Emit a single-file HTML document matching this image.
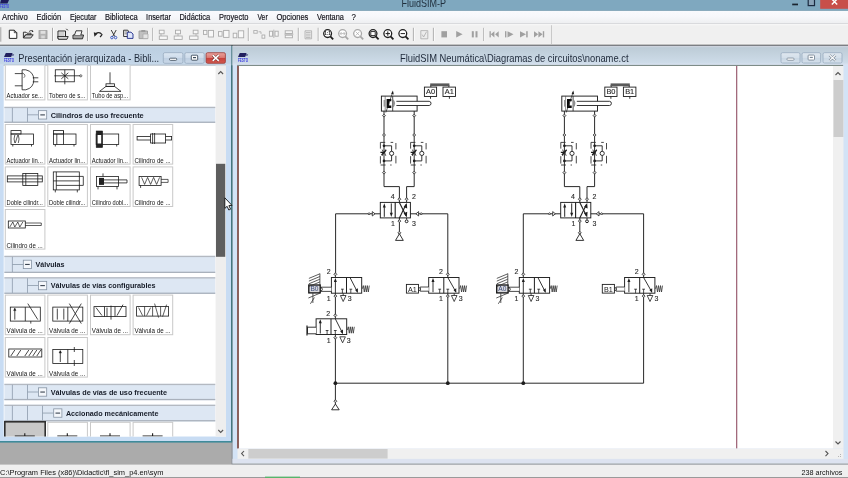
<!DOCTYPE html><html><head><meta charset="utf-8"><style>*{margin:0;padding:0}html,body{width:848px;height:478px;overflow:hidden;background:#ababab}svg{display:block}</style></head><body>
<svg width="848" height="478" viewBox="0 0 848 478" style="will-change:transform" font-family='"Liberation Sans", sans-serif'>
<defs>
<linearGradient id="gtitle" x1="0" y1="0" x2="0" y2="1"><stop offset="0" stop-color="#d3dee9"/><stop offset="0.1" stop-color="#bccfe1"/><stop offset="0.9" stop-color="#c4d6e8"/><stop offset="1" stop-color="#d4e2ef"/></linearGradient>
<linearGradient id="gtitle2" x1="0" y1="0" x2="0" y2="1"><stop offset="0" stop-color="#d6d8e2"/><stop offset="0.1" stop-color="#bdccd7"/><stop offset="0.85" stop-color="#cddbe8"/><stop offset="1" stop-color="#dbe4f3"/></linearGradient>
<linearGradient id="gbtn" x1="0" y1="0" x2="0" y2="1"><stop offset="0" stop-color="#dce7f2"/><stop offset="0.5" stop-color="#cddbea"/><stop offset="0.5" stop-color="#bfd0e2"/><stop offset="1" stop-color="#c9d8e8"/></linearGradient>
<linearGradient id="gbtn2" x1="0" y1="0" x2="0" y2="1"><stop offset="0" stop-color="#dfe7ef"/><stop offset="0.5" stop-color="#d4dfea"/><stop offset="0.5" stop-color="#c9d7e4"/><stop offset="1" stop-color="#d5e0eb"/></linearGradient>
<linearGradient id="gmenu" x1="0" y1="0" x2="0" y2="1"><stop offset="0" stop-color="#f9fafd"/><stop offset="0.5" stop-color="#f6f7fa"/><stop offset="1" stop-color="#eeeff1"/></linearGradient>
<linearGradient id="gclose" x1="0" y1="0" x2="0" y2="1"><stop offset="0" stop-color="#e9a09a"/><stop offset="0.45" stop-color="#dc7c76"/><stop offset="0.5" stop-color="#c8403b"/><stop offset="1" stop-color="#d25a50"/></linearGradient>
</defs>
<rect x="0" y="0" width="848" height="478" fill="#ababab" stroke="none" stroke-width="1" />
<rect x="0" y="0" width="848" height="10.5" fill="#7fa8bf" stroke="none" stroke-width="1" />
<rect x="0" y="10" width="848" height="1" fill="#6e97ad" stroke="none" stroke-width="1" />
<path d="M1 0 L9 0 L7.5 3.5 L0 3.5 Z" stroke="none" stroke-width="1" fill="#1d1a5a" />
<text x="4.5" y="8.2" font-size="4.6" fill="#3a3ae0" font-weight="bold" text-anchor="middle"  textLength="9" lengthAdjust="spacingAndGlyphs">FESTO</text>
<text x="401.5" y="7.4" font-size="11" fill="#1f2e3c" font-weight="normal" text-anchor="start"  textLength="44.5" lengthAdjust="spacingAndGlyphs">FluidSIM-P</text>
<rect x="792.2" y="3.6" width="5.8" height="1.7" fill="#1b2530" stroke="none" stroke-width="1" />
<rect x="808.2" y="-1" width="6.3" height="6.6" fill="#8aa3b8" stroke="#1b2a40" stroke-width="1.2" />
<rect x="820.2" y="0" width="28" height="8.8" fill="#c84f4a" stroke="none" stroke-width="1" />
<path d="M831.8 -1 L837.2 4.6 M837.2 -1 L831.8 4.6" stroke="#fff" stroke-width="1.4" fill="none" />
<rect x="0" y="10.8" width="848" height="12.4" fill="url(#gmenu)"/>
<rect x="0" y="23" width="848" height="1" fill="#d9dadd" stroke="none" stroke-width="1" />
<text x="2.0" y="20" font-size="8.4" fill="#101018" font-weight="normal" text-anchor="start" stroke="#101018" stroke-width="0.15" textLength="25.8" lengthAdjust="spacingAndGlyphs">Archivo</text>
<text x="36.6" y="20" font-size="8.4" fill="#101018" font-weight="normal" text-anchor="start" stroke="#101018" stroke-width="0.15" textLength="24.6" lengthAdjust="spacingAndGlyphs">Edición</text>
<text x="69.9" y="20" font-size="8.4" fill="#101018" font-weight="normal" text-anchor="start" stroke="#101018" stroke-width="0.15" textLength="26.5" lengthAdjust="spacingAndGlyphs">Ejecutar</text>
<text x="104.9" y="20" font-size="8.4" fill="#101018" font-weight="normal" text-anchor="start" stroke="#101018" stroke-width="0.15" textLength="32.8" lengthAdjust="spacingAndGlyphs">Biblioteca</text>
<text x="146.1" y="20" font-size="8.4" fill="#101018" font-weight="normal" text-anchor="start" stroke="#101018" stroke-width="0.15" textLength="24.8" lengthAdjust="spacingAndGlyphs">Insertar</text>
<text x="179.4" y="20" font-size="8.4" fill="#101018" font-weight="normal" text-anchor="start" stroke="#101018" stroke-width="0.15" textLength="30.8" lengthAdjust="spacingAndGlyphs">Didáctica</text>
<text x="218.9" y="20" font-size="8.4" fill="#101018" font-weight="normal" text-anchor="start" stroke="#101018" stroke-width="0.15" textLength="29.5" lengthAdjust="spacingAndGlyphs">Proyecto</text>
<text x="257.4" y="20" font-size="8.4" fill="#101018" font-weight="normal" text-anchor="start" stroke="#101018" stroke-width="0.15" textLength="10.3" lengthAdjust="spacingAndGlyphs">Ver</text>
<text x="276.4" y="20" font-size="8.4" fill="#101018" font-weight="normal" text-anchor="start" stroke="#101018" stroke-width="0.15" textLength="32" lengthAdjust="spacingAndGlyphs">Opciones</text>
<text x="316.9" y="20" font-size="8.4" fill="#101018" font-weight="normal" text-anchor="start" stroke="#101018" stroke-width="0.15" textLength="27" lengthAdjust="spacingAndGlyphs">Ventana</text>
<text x="351.6" y="20" font-size="8.4" fill="#101018" font-weight="normal" text-anchor="start" stroke="#101018" stroke-width="0.15" textLength="4.4" lengthAdjust="spacingAndGlyphs">?</text>
<rect x="0" y="24" width="848" height="21" fill="#f0f0f0" stroke="none" stroke-width="1" />
<rect x="0" y="43.8" width="848" height="0.7" fill="#fbfbfb" stroke="none" stroke-width="1" />
<rect x="0" y="44.7" width="848" height="1.3" fill="#4a4a4a" stroke="none" stroke-width="1" />
<rect x="0" y="27.2" width="1.4" height="14.5" fill="#b9b9b9" stroke="none" stroke-width="1" />
<path d="M9.3 30.2 L14.3 30.2 L16.8 32.7 L16.8 38.4 L9.3 38.4 Z" stroke="#262626" stroke-width="1.0" fill="#fff" />
<path d="M14.3 30.2 L14.3 32.7 L16.8 32.7" stroke="#262626" stroke-width="0.8" fill="none" />
<path d="M23.4 32.2 L26 32.2 L27 33.2 L31 33.2 L31 34.8 L25.5 34.8 L23.4 38 Z" stroke="#262626" stroke-width="0.9" fill="#e8e8e8" />
<path d="M23.4 38 L25.8 34.8 L33.2 34.8 L30.8 38 Z" stroke="#262626" stroke-width="0.9" fill="#cfcfcf" />
<path d="M29 31.5 Q31 29.6 33 31.2" stroke="#262626" stroke-width="0.8" fill="none" />
<path d="M32.2 30.2 L33.6 31.4 L31.8 32.2 Z" stroke="none" stroke-width="1" fill="#262626" />
<rect x="39.0" y="30.6" width="8" height="8" fill="#b4b4b4" stroke="#9a9a9a" stroke-width="0.8" />
<rect x="40.6" y="30.8" width="4.8" height="3" fill="#e0e0e0" stroke="none" stroke-width="1" />
<rect x="41.2" y="35.6" width="3.6" height="2.8" fill="#d8d8d8" stroke="none" stroke-width="1" />
<rect x="52.0" y="27.8" width="1" height="13.2" fill="#a9a9a9" stroke="none" stroke-width="1" />
<rect x="53.0" y="27.8" width="0.7" height="13.2" fill="#ffffff" stroke="none" stroke-width="1" />
<path d="M58 31 L65.5 31 L65.5 38.8 L58 38.8 Z" stroke="#262626" stroke-width="1.0" fill="#fff" />
<path d="M59 33 L64.5 33 M59 35 L64.5 35" stroke="#777" stroke-width="0.7" fill="none" />
<path d="M57.6 36.5 L68.2 36.5 L67 39.3 L58.5 39.3 Z" stroke="#262626" stroke-width="0.9" fill="#d5d5d5" />
<path d="M66.3 28.8 L67.8 30.3" stroke="#262626" stroke-width="1.0" fill="none" />
<path d="M73 35 L83.5 35 L82.5 38.8 L73 38.8 Z" stroke="#262626" stroke-width="1.0" fill="#cacaca" />
<path d="M74.5 35 L76 30.8 L82 30.8 L80.8 35" stroke="#262626" stroke-width="0.9" fill="#f4f4f4" />
<path d="M74 37 L82.5 37" stroke="#555" stroke-width="0.7" fill="none" />
<rect x="87.0" y="27.8" width="1" height="13.2" fill="#a9a9a9" stroke="none" stroke-width="1" />
<rect x="88.0" y="27.8" width="0.7" height="13.2" fill="#ffffff" stroke="none" stroke-width="1" />
<path d="M95.5 34 Q99 31 102 34.6 Q101 36.2 100 37" stroke="#262626" stroke-width="1.1" fill="none" />
<path d="M93.8 32.2 L97.8 33.4 L94.4 36.8 Z" stroke="none" stroke-width="1" fill="#262626" />
<path d="M111.2 30 L114.8 36.5 M116.2 30 L112.6 36.5" stroke="#262626" stroke-width="0.9" fill="none" />
<circle cx="111.9" cy="37.6" r="1.25" fill="none" stroke="#3050c0" stroke-width="0.9"/>
<circle cx="115.6" cy="37.6" r="1.25" fill="none" stroke="#3050c0" stroke-width="0.9"/>
<path d="M123.6 30.2 L127.8 30.2 L128.4 31 L128.4 36.5 L123.6 36.5 Z" stroke="#262626" stroke-width="0.9" fill="#f2f2f2" />
<path d="M127.3 32.2 L131 32.2 L133 34 L133 38.4 L127.3 38.4 Z" stroke="#1c2a8a" stroke-width="0.9" fill="#dfe6fa" />
<path d="M124.6 32 L127 32 M124.6 33.8 L127 33.8" stroke="#444" stroke-width="0.6" fill="none" />
<path d="M139 31 L147.5 31 L147.5 38.6 L139 38.6 Z" stroke="#9c9c9c" stroke-width="0.9" fill="#c0c0c0" />
<rect x="141.3" y="30" width="4" height="2" fill="#9c9c9c" stroke="none" stroke-width="1" />
<path d="M143 34 L148 34 L148 38.6 L143 38.6 Z" stroke="#a8a8a8" stroke-width="0.7" fill="#e4e4e4" />
<rect x="152.3" y="27.8" width="1" height="13.2" fill="#a9a9a9" stroke="none" stroke-width="1" />
<rect x="153.3" y="27.8" width="0.7" height="13.2" fill="#ffffff" stroke="none" stroke-width="1" />
<rect x="159.3" y="30.2" width="4.8" height="3.6" fill="#f8f8f8" stroke="#ababab" stroke-width="0.9" />
<rect x="159.3" y="36" width="8" height="3.4" fill="#f8f8f8" stroke="#ababab" stroke-width="0.9" />
<path d="M161 33.8 L161 36" stroke="#ababab" stroke-width="0.8" fill="none" />
<rect x="175.5" y="30.2" width="5" height="3.6" fill="#f8f8f8" stroke="#ababab" stroke-width="0.9" />
<rect x="174.2" y="36" width="8" height="3.4" fill="#f8f8f8" stroke="#ababab" stroke-width="0.9" />
<path d="M178 33.8 L178 36" stroke="#ababab" stroke-width="0.8" fill="none" />
<rect x="193.2" y="30.2" width="4.8" height="3.6" fill="#f8f8f8" stroke="#ababab" stroke-width="0.9" />
<rect x="189.6" y="36" width="8.4" height="3.4" fill="#f8f8f8" stroke="#ababab" stroke-width="0.9" />
<path d="M196 33.8 L196 36" stroke="#ababab" stroke-width="0.8" fill="none" />
<rect x="203.5" y="30.4" width="3.4" height="4" fill="#f8f8f8" stroke="#ababab" stroke-width="0.9" />
<rect x="208.3" y="30.4" width="5.2" height="6.6" fill="#f8f8f8" stroke="#ababab" stroke-width="0.9" />
<rect x="218.5" y="31.6" width="3.6" height="4.6" fill="#f8f8f8" stroke="#ababab" stroke-width="0.9" />
<rect x="223.6" y="30.4" width="5.4" height="7" fill="#f8f8f8" stroke="#ababab" stroke-width="0.9" />
<rect x="233.2" y="33.2" width="3.6" height="4.6" fill="#f8f8f8" stroke="#ababab" stroke-width="0.9" />
<rect x="238.3" y="30.8" width="5.4" height="7" fill="#f8f8f8" stroke="#ababab" stroke-width="0.9" />
<rect x="247.8" y="27.8" width="1" height="13.2" fill="#a9a9a9" stroke="none" stroke-width="1" />
<rect x="248.8" y="27.8" width="0.7" height="13.2" fill="#ffffff" stroke="none" stroke-width="1" />
<rect x="253.8" y="30.6" width="3.4" height="2.6" fill="#f8f8f8" stroke="#ababab" stroke-width="0.9" />
<rect x="262" y="35" width="2.8" height="3.2" fill="#f8f8f8" stroke="#ababab" stroke-width="0.9" />
<path d="M258.5 31.8 L261 31.8 L261 34" stroke="#ababab" stroke-width="0.8" fill="none" />
<rect x="269.4" y="31.2" width="3.2" height="5" fill="#f8f8f8" stroke="#ababab" stroke-width="0.9" />
<rect x="275" y="31.2" width="3.2" height="5" fill="#f8f8f8" stroke="#ababab" stroke-width="0.9" />
<path d="M273.8 29.6 L273.8 38" stroke="#ababab" stroke-width="0.8" fill="none" />
<rect x="285.2" y="30.8" width="7.2" height="2.6" fill="#f8f8f8" stroke="#ababab" stroke-width="0.9" />
<rect x="285.2" y="35.2" width="7.2" height="2.6" fill="#f8f8f8" stroke="#ababab" stroke-width="0.9" />
<path d="M284.4 34.2 L293.4 34.2" stroke="#ababab" stroke-width="0.8" fill="none" />
<rect x="297.8" y="27.8" width="1" height="13.2" fill="#a9a9a9" stroke="none" stroke-width="1" />
<rect x="298.8" y="27.8" width="0.7" height="13.2" fill="#ffffff" stroke="none" stroke-width="1" />
<path d="M305 30.8 L311.6 30.8 L311.6 38.8 L305 38.8 Z" stroke="#ababab" stroke-width="0.8" fill="#ececec" />
<path d="M306 32.5 L310.6 32.5 M306 34.2 L310.6 34.2 M306 35.9 L310.6 35.9 M306 37.5 L310.6 37.5" stroke="#ababab" stroke-width="0.7" fill="none" />
<rect x="317.7" y="27.8" width="1" height="13.2" fill="#a9a9a9" stroke="none" stroke-width="1" />
<rect x="318.7" y="27.8" width="0.7" height="13.2" fill="#ffffff" stroke="none" stroke-width="1" />
<circle cx="327.6" cy="33.6" r="3.9" fill="#fff" stroke="#1e1e1e" stroke-width="1.3"/>
<path d="M330.3 36.4 L333.20000000000005 39.4" stroke="#1e1e1e" stroke-width="1.8" fill="none" />
<text x="327.6" y="35.3" font-size="4.6" fill="#1e1e1e" font-weight="bold" text-anchor="middle" >1:1</text>
<circle cx="342.6" cy="33.6" r="3.9" fill="#fff" stroke="#a8a8a8" stroke-width="1.3"/>
<path d="M345.3 36.4 L348.20000000000005 39.4" stroke="#a8a8a8" stroke-width="1.8" fill="none" />
<path d="M340.20000000000005 33.6 L345.0 33.6 M341.6 32 L340.20000000000005 33.6 L341.6 35.2 M343.6 32 L345.0 33.6 L343.6 35.2" stroke="#a8a8a8" stroke-width="0.7" fill="none" />
<circle cx="357.6" cy="33.6" r="3.9" fill="#fff" stroke="#a8a8a8" stroke-width="1.3"/>
<path d="M360.3 36.4 L363.20000000000005 39.4" stroke="#a8a8a8" stroke-width="1.8" fill="none" />
<path d="M355.6 31.6 L359.6 35.6 M359.6 31.6 L355.6 35.6" stroke="#a8a8a8" stroke-width="0.7" fill="none" />
<circle cx="373.0" cy="33.6" r="3.9" fill="#fff" stroke="#1e1e1e" stroke-width="1.3"/>
<path d="M375.7 36.4 L378.6 39.4" stroke="#1e1e1e" stroke-width="1.8" fill="none" />
<rect x="370.8" y="31.6" width="4.4" height="4" fill="none" stroke="#1e1e1e" stroke-width="0.9" />
<circle cx="387.8" cy="33.6" r="3.9" fill="#fff" stroke="#1e1e1e" stroke-width="1.3"/>
<path d="M390.5 36.4 L393.40000000000003 39.4" stroke="#1e1e1e" stroke-width="1.8" fill="none" />
<path d="M385.6 33.6 L390.0 33.6 M387.8 31.4 L387.8 35.8" stroke="#1e1e1e" stroke-width="1.0" fill="none" />
<circle cx="402.8" cy="33.6" r="3.9" fill="#fff" stroke="#1e1e1e" stroke-width="1.3"/>
<path d="M405.5 36.4 L408.40000000000003 39.4" stroke="#1e1e1e" stroke-width="1.8" fill="none" />
<path d="M400.6 33.6 L405.0 33.6" stroke="#1e1e1e" stroke-width="1.0" fill="none" />
<rect x="412.9" y="27.8" width="1" height="13.2" fill="#a9a9a9" stroke="none" stroke-width="1" />
<rect x="413.9" y="27.8" width="0.7" height="13.2" fill="#ffffff" stroke="none" stroke-width="1" />
<path d="M420.8 30.6 L427.8 30.6 L427.8 38.8 L420.8 38.8 Z" stroke="#ababab" stroke-width="0.8" fill="#ececec" />
<path d="M422.2 34.6 L423.6 37 L426.6 31.6" stroke="#ababab" stroke-width="0.8" fill="none" />
<rect x="432.9" y="27.8" width="1" height="13.2" fill="#a9a9a9" stroke="none" stroke-width="1" />
<rect x="433.9" y="27.8" width="0.7" height="13.2" fill="#ffffff" stroke="none" stroke-width="1" />
<rect x="441.4" y="31.2" width="5.6" height="6.2" fill="#a0a0a0" stroke="none" stroke-width="1" />
<path d="M456.2 31.1 L462.6 34.3 L456.2 37.5 Z" stroke="none" stroke-width="1" fill="#a0a0a0" />
<rect x="471.8" y="31.2" width="2" height="6.2" fill="#a0a0a0" stroke="none" stroke-width="1" />
<rect x="475.5" y="31.2" width="2" height="6.2" fill="#a0a0a0" stroke="none" stroke-width="1" />
<rect x="483.3" y="27.8" width="1" height="13.2" fill="#a9a9a9" stroke="none" stroke-width="1" />
<rect x="484.3" y="27.8" width="0.7" height="13.2" fill="#ffffff" stroke="none" stroke-width="1" />
<rect x="489.5" y="31.2" width="1.3" height="6.2" fill="#a0a0a0" stroke="none" stroke-width="1" />
<path d="M494.4 31.2 L490.8 34.3 L494.4 37.4 Z M498.7 31.2 L495.1 34.3 L498.7 37.4 Z" stroke="none" stroke-width="1" fill="#a0a0a0" />
<rect x="505" y="31.2" width="1.4" height="6.2" fill="#a0a0a0" stroke="none" stroke-width="1" />
<path d="M507.5 31.2 L513.5 34.3 L507.5 37.4 Z" stroke="none" stroke-width="1" fill="#a0a0a0" />
<path d="M520 31.2 L526 34.3 L520 37.4 Z" stroke="none" stroke-width="1" fill="#a0a0a0" />
<rect x="526.2" y="31.2" width="1.5" height="6.2" fill="#a0a0a0" stroke="none" stroke-width="1" />
<path d="M534 31.2 L538.2 34.3 L534 37.4 Z M538.4 31.2 L542.6 34.3 L538.4 37.4 Z" stroke="none" stroke-width="1" fill="#a0a0a0" />
<rect x="542.8" y="31.2" width="1.4" height="6.2" fill="#a0a0a0" stroke="none" stroke-width="1" />
<rect x="551.0" y="25" width="0.9" height="19" fill="#c4c4c4" stroke="none" stroke-width="1" />
<rect x="0" y="24.4" width="848" height="0.8" fill="#fafafa" stroke="none" stroke-width="1" />
<rect x="0" y="45.8" width="231.3" height="395.4" fill="#c8dcf3" stroke="none" stroke-width="1" />
<rect x="231.0" y="45.8" width="1.7" height="396.8" fill="#44757e" stroke="none" stroke-width="1" />
<rect x="231.6" y="442.6" width="1.1" height="21.2" fill="#8a9099" stroke="none" stroke-width="1" />
<rect x="0" y="441.0" width="231.3" height="1.6" fill="#3f8b9b" stroke="none" stroke-width="1" />
<rect x="0" y="45.8" width="231.3" height="19.5" fill="url(#gtitle)"/>
<rect x="3.7" y="64.8" width="222.3" height="1.0" fill="#8797a3" stroke="none" stroke-width="1" />
<path d="M5.8 53 L12.6 53 L12 54.6 L14.2 54.6 L13.6 55.6 L11.6 55.6 L11.2 57 L4 57 Z" stroke="none" stroke-width="1" fill="#22205e" />
<text x="9" y="61.8" font-size="4.6" fill="#3a3ae0" font-weight="bold" text-anchor="middle"  textLength="10" lengthAdjust="spacingAndGlyphs">FESTO</text>
<text x="18.3" y="61.6" font-size="11" fill="#1f2a3a" font-weight="normal" text-anchor="start"  textLength="140.8" lengthAdjust="spacingAndGlyphs">Presentación jerarquizada - Bibli...</text>
<rect x="163.3" y="52.7" width="19.6" height="10.6" rx="1.5" fill="url(#gbtn)" stroke="#98abbf" stroke-width="0.8"/>
<rect x="169.50000000000003" y="58.2" width="7.2" height="2.2" rx="1" fill="#fff" stroke="#3a4a5a" stroke-width="0.8"/>
<rect x="184.8" y="52.7" width="19.4" height="10.6" rx="1.5" fill="url(#gbtn)" stroke="#98abbf" stroke-width="0.8"/>
<rect x="191.3" y="55.2" width="6.4" height="5" rx="0.8" fill="#fff" stroke="#3a4a5a" stroke-width="0.9"/>
<rect x="193.0" y="57.0" width="3" height="1.2" fill="#3a4a5a" stroke="none" stroke-width="1" />
<rect x="206.1" y="52.7" width="19.3" height="10.6" rx="1.5" fill="url(#gclose)" stroke="#9a3a36" stroke-width="0.8"/>
<path d="M212.75 55.2 L218.75 60.8 M218.75 55.2 L212.75 60.8" stroke="#6a2a26" stroke-width="2.6" fill="none" />
<path d="M212.75 55.2 L218.75 60.8 M218.75 55.2 L212.75 60.8" stroke="#fff" stroke-width="1.6" fill="none" />
<rect x="3.7" y="65.5" width="222.3" height="371" fill="#ffffff" stroke="none" stroke-width="1" />
<clipPath id="clib"><rect x="3.7" y="65.5" width="211.9" height="371"/></clipPath>
<g clip-path="url(#clib)">
<rect x="5.3" y="60.3" width="39.6" height="39.6" fill="#ffffff" stroke="#c9c9c9" stroke-width="1" />
<path d="M14.8 73.6 L22.3 73.6 M14.8 85.8 L22.3 85.8 M32.8 77.8 L38.3 77.8 M32.8 81.8 L38.3 81.8" stroke="#1a1a1a" stroke-width="0.8" fill="none" />
<path d="M22.1 69.8 L25.8 69.8 Q33.8 71.8 33.8 79.8 Q33.8 87.8 25.8 89.8 L22.1 89.8 Z" stroke="#1a1a1a" stroke-width="0.8" fill="none" />
<path d="M22.1 72.8 Q26.8 74.8 23.8 77.8" stroke="#1a1a1a" stroke-width="0.6" fill="none" />
<text x="6.6" y="98.3" font-size="6.6" fill="#141414" font-weight="normal" text-anchor="start"  textLength="36.2" lengthAdjust="spacingAndGlyphs">Actuador se...</text>
<rect x="47.8" y="60.3" width="39.6" height="39.6" fill="#ffffff" stroke="#c9c9c9" stroke-width="1" />
<rect x="55.3" y="69.8" width="19" height="12" fill="none" stroke="#1a1a1a" stroke-width="0.8" />
<path d="M54.3 75.8 L80.3 75.8 M64.8 69.8 L64.8 84.3 M61.3 72.8 L68.3 78.8 M68.3 72.8 L61.3 78.8" stroke="#1a1a1a" stroke-width="0.8" fill="none" />
<circle cx="80.8" cy="75.8" r="1.1" fill="none" stroke="#1a1a1a" stroke-width="0.6"/>
<text x="49.099999999999994" y="98.3" font-size="6.6" fill="#141414" font-weight="normal" text-anchor="start"  textLength="36.2" lengthAdjust="spacingAndGlyphs">Tobero de s...</text>
<rect x="90.5" y="60.3" width="39.6" height="39.6" fill="#ffffff" stroke="#c9c9c9" stroke-width="1" />
<path d="M110.0 72.3 L110.0 83.8" stroke="#1a1a1a" stroke-width="0.8" fill="none" />
<rect x="106.0" y="83.8" width="8.5" height="2.6" fill="none" stroke="#1a1a1a" stroke-width="0.8" />
<path d="M99.5 91.4 L121.0 91.4 L114.5 86.4 L106.0 86.4 Z" stroke="#1a1a1a" stroke-width="0.8" fill="none" />
<text x="91.8" y="98.3" font-size="6.6" fill="#141414" font-weight="normal" text-anchor="start"  textLength="36.2" lengthAdjust="spacingAndGlyphs">Tubo de asp...</text>
<rect x="4.4" y="106.8" width="211.2" height="16.10000000000001" fill="#dde7f3" stroke="none" stroke-width="1" />
<rect x="4.4" y="106.8" width="211.2" height="1.3" fill="#b4b9c1" stroke="none" stroke-width="1" />
<rect x="4.4" y="121.60000000000001" width="211.2" height="1.3" fill="#a9b1bc" stroke="none" stroke-width="1" />
<rect x="11.9" y="107.8" width="0.8" height="14.100000000000009" fill="#8d9bab" stroke="none" stroke-width="1" />
<rect x="27.1" y="107.8" width="0.8" height="14.100000000000009" fill="#8d9bab" stroke="none" stroke-width="1" />
<rect x="27.5" y="114.44999999999999" width="11.0" height="0.8" fill="#8d9bab" stroke="none" stroke-width="1" />
<rect x="38.5" y="110.64999999999999" width="8.2" height="8.4" fill="#f4f7fb" stroke="#8593a3" stroke-width="0.8"/>
<rect x="40.3" y="114.35" width="4.6" height="1.1" fill="#3a4450" stroke="none" stroke-width="1" />
<text x="50.7" y="117.64999999999999" font-size="7.9" fill="#161c28" font-weight="bold" text-anchor="start"  textLength="93" lengthAdjust="spacingAndGlyphs">Cilindros de uso frecuente</text>
<rect x="5.3" y="124.5" width="39.6" height="39.6" fill="#ffffff" stroke="#c9c9c9" stroke-width="1" />
<rect x="11.0" y="134.0" width="22.5" height="10.5" fill="none" stroke="#1a1a1a" stroke-width="0.8" />
<path d="M12.8 144.5 L12.8 146.5 M31.5 144.5 L31.5 146.5" stroke="#1a1a1a" stroke-width="0.8" fill="none" />
<rect x="11.0" y="130.6" width="10" height="3.4" fill="none" stroke="#1a1a1a" stroke-width="0.8" />
<path d="M14.8 135.0 Q13.3 139.0 14.8 143.0 M18.3 135.0 Q19.8 139.0 18.3 143.0 M15.3 143.0 L17.8 135.0" stroke="#1a1a1a" stroke-width="0.7" fill="none" />
<text x="6.6" y="162.5" font-size="6.6" fill="#141414" font-weight="normal" text-anchor="start"  textLength="36.2" lengthAdjust="spacingAndGlyphs">Actuador lin...</text>
<rect x="47.8" y="124.5" width="39.6" height="39.6" fill="#ffffff" stroke="#c9c9c9" stroke-width="1" />
<rect x="53.5" y="134.0" width="22.5" height="10.5" fill="none" stroke="#1a1a1a" stroke-width="0.8" />
<path d="M55.3 144.5 L55.3 146.5 M74.0 144.5 L74.0 146.5" stroke="#1a1a1a" stroke-width="0.8" fill="none" />
<rect x="53.5" y="130.6" width="10" height="3.4" fill="none" stroke="#1a1a1a" stroke-width="0.8" />
<path d="M56.8 134.0 L56.8 144.5 M63.5 130.6 L63.5 144.5" stroke="#1a1a1a" stroke-width="0.8" fill="none" />
<text x="49.099999999999994" y="162.5" font-size="6.6" fill="#141414" font-weight="normal" text-anchor="start"  textLength="36.2" lengthAdjust="spacingAndGlyphs">Actuador lin...</text>
<rect x="90.5" y="124.5" width="39.6" height="39.6" fill="#ffffff" stroke="#c9c9c9" stroke-width="1" />
<rect x="96.2" y="134.0" width="22.5" height="10.5" fill="none" stroke="#1a1a1a" stroke-width="0.8" />
<path d="M98.0 144.5 L98.0 146.5 M116.7 144.5 L116.7 146.5" stroke="#1a1a1a" stroke-width="0.8" fill="none" />
<rect x="96.2" y="131.0" width="6.4" height="16.5" fill="#222" stroke="#1a1a1a" stroke-width="0.6" />
<rect x="97.6" y="135.0" width="3.6" height="8.5" fill="#fff" stroke="none" stroke-width="1" />
<text x="91.8" y="162.5" font-size="6.6" fill="#141414" font-weight="normal" text-anchor="start"  textLength="36.2" lengthAdjust="spacingAndGlyphs">Actuador lin...</text>
<rect x="133.1" y="124.5" width="39.6" height="39.6" fill="#ffffff" stroke="#c9c9c9" stroke-width="1" />
<rect x="137.1" y="136.5" width="34.5" height="3.5" fill="none" stroke="#1a1a1a" stroke-width="0.8" />
<rect x="150.6" y="134.0" width="15" height="9" fill="#fff" stroke="#1a1a1a" stroke-width="0.8" />
<path d="M152.6 133.0 L152.6 144.0 M154.6 133.0 L154.6 144.0" stroke="#1a1a1a" stroke-width="0.8" fill="none" />
<text x="134.4" y="162.5" font-size="6.6" fill="#141414" font-weight="normal" text-anchor="start"  textLength="36.2" lengthAdjust="spacingAndGlyphs">Cilindro de ...</text>
<rect x="5.3" y="166.9" width="39.6" height="39.6" fill="#ffffff" stroke="#c9c9c9" stroke-width="1" />
<rect x="7.3" y="175.9" width="35" height="6" fill="none" stroke="#1a1a1a" stroke-width="0.8" />
<rect x="22.8" y="173.4" width="15" height="12" fill="none" stroke="#1a1a1a" stroke-width="0.8" />
<path d="M7.3 178.9 L42.3 178.9 M25.8 173.4 L25.8 185.4" stroke="#1a1a1a" stroke-width="0.8" fill="none" />
<text x="6.6" y="204.9" font-size="6.6" fill="#141414" font-weight="normal" text-anchor="start"  textLength="36.2" lengthAdjust="spacingAndGlyphs">Doble cilindr...</text>
<rect x="47.8" y="166.9" width="39.6" height="39.6" fill="#ffffff" stroke="#c9c9c9" stroke-width="1" />
<rect x="53.3" y="171.9" width="26" height="18" fill="none" stroke="#1a1a1a" stroke-width="0.8" />
<path d="M56.3 171.9 L56.3 189.9 M53.3 180.9 L79.3 180.9 M56.3 176.4 L83.3 176.4 L83.3 185.4 L56.3 185.4 M55.3 189.9 L55.3 192.4 M77.3 189.9 L77.3 192.4" stroke="#1a1a1a" stroke-width="0.8" fill="none" />
<text x="49.099999999999994" y="204.9" font-size="6.6" fill="#141414" font-weight="normal" text-anchor="start"  textLength="36.2" lengthAdjust="spacingAndGlyphs">Doble cilindr...</text>
<rect x="90.5" y="166.9" width="39.6" height="39.6" fill="#ffffff" stroke="#c9c9c9" stroke-width="1" />
<rect x="96.5" y="176.4" width="22" height="10" fill="none" stroke="#1a1a1a" stroke-width="0.8" />
<rect x="99.0" y="177.9" width="5" height="7" fill="#222" stroke="none" stroke-width="1" />
<path d="M104.0 179.9 L127.0 179.9 L127.0 182.9 L104.0 182.9 M103.0 173.4 L103.0 176.4 M117.0 186.4 L117.0 189.4 M98.0 186.4 L98.0 189.4" stroke="#1a1a1a" stroke-width="0.8" fill="none" />
<text x="91.8" y="204.9" font-size="6.6" fill="#141414" font-weight="normal" text-anchor="start"  textLength="36.2" lengthAdjust="spacingAndGlyphs">Cilindro dobl...</text>
<rect x="133.1" y="166.9" width="39.6" height="39.6" fill="#ffffff" stroke="#c9c9c9" stroke-width="1" />
<rect x="139.1" y="176.4" width="22" height="9" fill="none" stroke="#1a1a1a" stroke-width="0.8" />
<path d="M161.1 179.4 L168.1 179.4 L168.1 182.4 L161.1 182.4 M141.6 177.4 L144.6 184.4 L147.6 177.4 L150.6 184.4 L153.6 177.4 L156.6 184.4 L159.6 177.4" stroke="#1a1a1a" stroke-width="0.7" fill="none" />
<path d="M140.6 185.4 L140.6 187.9" stroke="#1a1a1a" stroke-width="0.8" fill="none" />
<text x="134.4" y="204.9" font-size="6.6" fill="#141414" font-weight="normal" text-anchor="start"  textLength="36.2" lengthAdjust="spacingAndGlyphs">Cilindro de ...</text>
<rect x="5.3" y="209.5" width="39.6" height="39.6" fill="#ffffff" stroke="#c9c9c9" stroke-width="1" />
<rect x="8.3" y="221.0" width="17" height="7" fill="none" stroke="#1a1a1a" stroke-width="0.8" />
<path d="M25.3 223.0 L41.3 223.0 L41.3 225.5 L25.3 225.5 M9.8 227.0 L12.8 222.0 L14.8 227.0 L17.8 222.0 L19.8 227.0 L22.8 222.0" stroke="#1a1a1a" stroke-width="0.7" fill="none" />
<text x="6.6" y="247.5" font-size="6.6" fill="#141414" font-weight="normal" text-anchor="start"  textLength="36.2" lengthAdjust="spacingAndGlyphs">Cilindro de ...</text>
<rect x="4.4" y="255.8" width="211.2" height="17.19999999999999" fill="#dde7f3" stroke="none" stroke-width="1" />
<rect x="4.4" y="255.8" width="211.2" height="1.3" fill="#b4b9c1" stroke="none" stroke-width="1" />
<rect x="4.4" y="271.7" width="211.2" height="1.3" fill="#a9b1bc" stroke="none" stroke-width="1" />
<rect x="11.9" y="256.8" width="0.8" height="15.199999999999989" fill="#8d9bab" stroke="none" stroke-width="1" />
<rect x="12.3" y="264.0" width="11.0" height="0.8" fill="#8d9bab" stroke="none" stroke-width="1" />
<rect x="23.3" y="260.2" width="8.2" height="8.4" fill="#f4f7fb" stroke="#8593a3" stroke-width="0.8"/>
<rect x="25.1" y="263.9" width="4.6" height="1.1" fill="#3a4450" stroke="none" stroke-width="1" />
<text x="35.5" y="267.2" font-size="7.9" fill="#161c28" font-weight="bold" text-anchor="start"  textLength="29" lengthAdjust="spacingAndGlyphs">Válvulas</text>
<rect x="4.4" y="277.2" width="211.2" height="16.69999999999999" fill="#dde7f3" stroke="none" stroke-width="1" />
<rect x="4.4" y="277.2" width="211.2" height="1.3" fill="#b4b9c1" stroke="none" stroke-width="1" />
<rect x="4.4" y="292.59999999999997" width="211.2" height="1.3" fill="#a9b1bc" stroke="none" stroke-width="1" />
<rect x="11.9" y="278.2" width="0.8" height="14.699999999999989" fill="#8d9bab" stroke="none" stroke-width="1" />
<rect x="27.1" y="278.2" width="0.8" height="14.699999999999989" fill="#8d9bab" stroke="none" stroke-width="1" />
<rect x="27.5" y="285.15" width="11.0" height="0.8" fill="#8d9bab" stroke="none" stroke-width="1" />
<rect x="38.5" y="281.34999999999997" width="8.2" height="8.4" fill="#f4f7fb" stroke="#8593a3" stroke-width="0.8"/>
<rect x="40.3" y="285.04999999999995" width="4.6" height="1.1" fill="#3a4450" stroke="none" stroke-width="1" />
<text x="50.7" y="288.34999999999997" font-size="7.9" fill="#161c28" font-weight="bold" text-anchor="start"  textLength="104.8" lengthAdjust="spacingAndGlyphs">Válvulas de vías configurables</text>
<rect x="5.3" y="295.1" width="39.6" height="39.6" fill="#ffffff" stroke="#c9c9c9" stroke-width="1" />
<rect x="10.3" y="307.1" width="30" height="14" fill="none" stroke="#1a1a1a" stroke-width="0.8" />
<path d="M25.3 307.1 L25.3 321.1 M14.8 319.6 L14.8 308.6 M27.8 303.6 L37.8 319.6 M30.8 321.1 L30.8 323.6" stroke="#1a1a1a" stroke-width="0.8" fill="none" />
<path d="M13.600000000000001 310.6 L14.8 308.1 L16.0 310.6 Z" stroke="#1a1a1a" stroke-width="0.4" fill="#1a1a1a" />
<text x="6.6" y="333.1" font-size="6.6" fill="#141414" font-weight="normal" text-anchor="start"  textLength="36.2" lengthAdjust="spacingAndGlyphs">Válvula de ...</text>
<rect x="47.8" y="295.1" width="39.6" height="39.6" fill="#ffffff" stroke="#c9c9c9" stroke-width="1" />
<rect x="52.8" y="307.1" width="30" height="14" fill="none" stroke="#1a1a1a" stroke-width="0.8" />
<path d="M67.8 307.1 L67.8 321.1 M57.3 319.6 L57.3 308.6 M63.8 308.6 L63.8 319.6 M69.3 303.6 L81.3 323.6 M81.3 303.6 L69.3 323.6" stroke="#1a1a1a" stroke-width="0.8" fill="none" />
<text x="49.099999999999994" y="333.1" font-size="6.6" fill="#141414" font-weight="normal" text-anchor="start"  textLength="36.2" lengthAdjust="spacingAndGlyphs">Válvula de ...</text>
<rect x="90.5" y="295.1" width="39.6" height="39.6" fill="#ffffff" stroke="#c9c9c9" stroke-width="1" />
<rect x="94.0" y="306.6" width="32" height="10" fill="none" stroke="#1a1a1a" stroke-width="0.8" />
<path d="M104.5 306.6 L104.5 316.6 M115.0 306.6 L115.0 316.6 M96.0 307.6 L102.0 315.6 M107.0 307.6 L107.0 316.6 M111.0 305.6 L111.0 319.6 M117.0 315.6 L123.0 304.6" stroke="#1a1a1a" stroke-width="0.8" fill="none" />
<text x="91.8" y="333.1" font-size="6.6" fill="#141414" font-weight="normal" text-anchor="start"  textLength="36.2" lengthAdjust="spacingAndGlyphs">Válvula de ...</text>
<rect x="133.1" y="295.1" width="39.6" height="39.6" fill="#ffffff" stroke="#c9c9c9" stroke-width="1" />
<rect x="136.6" y="306.6" width="32" height="9.5" fill="none" stroke="#1a1a1a" stroke-width="0.8" />
<path d="M144.6 306.6 L144.6 316.1 M152.6 306.6 L152.6 316.1 M160.6 306.6 L160.6 316.1 M138.6 307.6 L142.6 315.6 M146.6 315.6 L150.6 307.6 M154.6 303.6 L158.6 317.6 M162.6 316.6 L166.6 304.6" stroke="#1a1a1a" stroke-width="0.7" fill="none" />
<text x="134.4" y="333.1" font-size="6.6" fill="#141414" font-weight="normal" text-anchor="start"  textLength="36.2" lengthAdjust="spacingAndGlyphs">Válvula de ...</text>
<rect x="5.3" y="337.5" width="39.6" height="39.6" fill="#ffffff" stroke="#c9c9c9" stroke-width="1" />
<rect x="8.8" y="349.0" width="33" height="8" fill="none" stroke="#1a1a1a" stroke-width="0.8" />
<path d="M10.8 356.0 L14.8 350.0 M16.8 356.0 L20.8 350.0 M24.8 356.0 L28.8 350.0 M28.8 356.0 L32.8 350.0 M32.8 356.0 L36.8 350.0 M36.8 356.0 L40.8 350.0" stroke="#1a1a1a" stroke-width="0.8" fill="none" />
<text x="6.6" y="375.5" font-size="6.6" fill="#141414" font-weight="normal" text-anchor="start"  textLength="36.2" lengthAdjust="spacingAndGlyphs">Válvula de ...</text>
<rect x="47.8" y="337.5" width="39.6" height="39.6" fill="#ffffff" stroke="#c9c9c9" stroke-width="1" />
<rect x="52.8" y="349.5" width="30" height="14" fill="none" stroke="#1a1a1a" stroke-width="0.8" />
<path d="M67.8 349.5 L67.8 363.5 M60.3 362.0 L60.3 351.0 M74.3 347.0 L74.3 352.0 M74.3 360.0 L74.3 366.0" stroke="#1a1a1a" stroke-width="0.8" fill="none" />
<path d="M59.099999999999994 353.0 L60.3 350.5 L61.5 353.0 Z" stroke="#1a1a1a" stroke-width="0.4" fill="#1a1a1a" />
<text x="49.099999999999994" y="375.5" font-size="6.6" fill="#141414" font-weight="normal" text-anchor="start"  textLength="36.2" lengthAdjust="spacingAndGlyphs">Válvula de ...</text>
<rect x="4.4" y="383.8" width="211.2" height="16.399999999999977" fill="#dde7f3" stroke="none" stroke-width="1" />
<rect x="4.4" y="383.8" width="211.2" height="1.3" fill="#b4b9c1" stroke="none" stroke-width="1" />
<rect x="4.4" y="398.9" width="211.2" height="1.3" fill="#a9b1bc" stroke="none" stroke-width="1" />
<rect x="11.9" y="384.8" width="0.8" height="14.399999999999977" fill="#8d9bab" stroke="none" stroke-width="1" />
<rect x="27.1" y="384.8" width="0.8" height="14.399999999999977" fill="#8d9bab" stroke="none" stroke-width="1" />
<rect x="27.5" y="391.6" width="11.0" height="0.8" fill="#8d9bab" stroke="none" stroke-width="1" />
<rect x="38.5" y="387.8" width="8.2" height="8.4" fill="#f4f7fb" stroke="#8593a3" stroke-width="0.8"/>
<rect x="40.3" y="391.5" width="4.6" height="1.1" fill="#3a4450" stroke="none" stroke-width="1" />
<text x="50.7" y="394.8" font-size="7.9" fill="#161c28" font-weight="bold" text-anchor="start"  textLength="116.4" lengthAdjust="spacingAndGlyphs">Válvulas de vías de uso frecuente</text>
<rect x="4.4" y="404.7" width="211.2" height="16.69999999999999" fill="#dde7f3" stroke="none" stroke-width="1" />
<rect x="4.4" y="404.7" width="211.2" height="1.3" fill="#b4b9c1" stroke="none" stroke-width="1" />
<rect x="4.4" y="420.09999999999997" width="211.2" height="1.3" fill="#a9b1bc" stroke="none" stroke-width="1" />
<rect x="11.9" y="405.7" width="0.8" height="14.699999999999989" fill="#8d9bab" stroke="none" stroke-width="1" />
<rect x="27.1" y="405.7" width="0.8" height="14.699999999999989" fill="#8d9bab" stroke="none" stroke-width="1" />
<rect x="42.1" y="405.7" width="0.8" height="14.699999999999989" fill="#8d9bab" stroke="none" stroke-width="1" />
<rect x="42.5" y="412.65" width="11.200000000000003" height="0.8" fill="#8d9bab" stroke="none" stroke-width="1" />
<rect x="53.7" y="408.84999999999997" width="8.2" height="8.4" fill="#f4f7fb" stroke="#8593a3" stroke-width="0.8"/>
<rect x="55.5" y="412.54999999999995" width="4.6" height="1.1" fill="#3a4450" stroke="none" stroke-width="1" />
<text x="65.9" y="415.84999999999997" font-size="7.9" fill="#161c28" font-weight="bold" text-anchor="start"  textLength="92.6" lengthAdjust="spacingAndGlyphs">Accionado mecánicamente</text>
<rect x="4.8" y="421.8" width="40.4" height="40.4" fill="#c8c8c8" stroke="#303030" stroke-width="1.6" />
<path d="M14.8 436.0 L34.8 436.0 M24.8 433.3 L24.8 436.0" stroke="#1a1a1a" stroke-width="1.1" fill="none" />
<rect x="47.8" y="422.3" width="39.6" height="39.6" fill="#ffffff" stroke="#c9c9c9" stroke-width="1" />
<path d="M57.3 436.0 L77.3 436.0 M67.3 433.3 L67.3 436.0" stroke="#1a1a1a" stroke-width="1.1" fill="none" />
<rect x="90.5" y="422.3" width="39.6" height="39.6" fill="#ffffff" stroke="#c9c9c9" stroke-width="1" />
<path d="M100.0 436.0 L120.0 436.0 M110.0 433.3 L110.0 436.0" stroke="#1a1a1a" stroke-width="1.1" fill="none" />
<rect x="133.1" y="422.3" width="39.6" height="39.6" fill="#ffffff" stroke="#c9c9c9" stroke-width="1" />
<path d="M142.6 436.0 L162.6 436.0 M152.6 433.3 L152.6 436.0" stroke="#1a1a1a" stroke-width="1.1" fill="none" />
</g>
<rect x="215.6" y="65.5" width="10.4" height="371" fill="#eeeeee" stroke="none" stroke-width="1" />
<rect x="216" y="163.8" width="9.2" height="93" fill="#5e5e5e" stroke="none" stroke-width="1" />
<path d="M218.3 74 L220.7 71.6 L223.1 74" stroke="#555" stroke-width="1.1" fill="none" />
<path d="M218.3 430 L220.7 432.4 L223.1 430" stroke="#555" stroke-width="1.1" fill="none" />
<rect x="232.7" y="45.8" width="615.3" height="418" fill="#d3e3f6" stroke="none" stroke-width="1" />
<rect x="232.5" y="458.8" width="615.5" height="4.4" fill="#dde3f0" stroke="none" stroke-width="1" />
<rect x="232.5" y="463" width="615.5" height="0.7" fill="#f4f6fa" stroke="none" stroke-width="1" />
<rect x="232.5" y="45.8" width="615.5" height="19.5" fill="url(#gtitle2)"/>
<rect x="237.1" y="64.9" width="606" height="1.2" fill="#7e8c88" stroke="none" stroke-width="1" />
<path d="M239.8 53 L246.6 53 L246 54.6 L248.2 54.6 L247.6 55.6 L245.6 55.6 L245.2 57 L238 57 Z" stroke="none" stroke-width="1" fill="#22205e" />
<text x="243" y="61.8" font-size="4.6" fill="#3a3ae0" font-weight="bold" text-anchor="middle"  textLength="10" lengthAdjust="spacingAndGlyphs">FESTO</text>
<text x="400" y="61.6" font-size="11" fill="#1f2a3a" font-weight="normal" text-anchor="start"  textLength="228.5" lengthAdjust="spacingAndGlyphs">FluidSIM Neumática\Diagramas de circuitos\noname.ct</text>
<rect x="781" y="52.7" width="19" height="10.3" rx="1.5" fill="url(#gbtn2)" stroke="#98abbf" stroke-width="0.8"/>
<rect x="786.9" y="58.050000000000004" width="7.2" height="2.2" rx="1" fill="#fff" stroke="#7a8896" stroke-width="0.8"/>
<rect x="802" y="52.7" width="18.6" height="10.3" rx="1.5" fill="url(#gbtn2)" stroke="#98abbf" stroke-width="0.8"/>
<rect x="808.0999999999999" y="55.050000000000004" width="6.4" height="5" rx="0.8" fill="#fff" stroke="#7a8896" stroke-width="0.9"/>
<rect x="809.8" y="56.85" width="3" height="1.2" fill="#7a8896" stroke="none" stroke-width="1" />
<rect x="823" y="52.7" width="19" height="10.3" rx="1.5" fill="url(#gbtn2)" stroke="#98abbf" stroke-width="0.8"/>
<path d="M829.5 55.050000000000004 L835.5 60.65 M835.5 55.050000000000004 L829.5 60.65" stroke="#7a8896" stroke-width="2.4" fill="none" />
<path d="M829.5 55.050000000000004 L835.5 60.65 M835.5 55.050000000000004 L829.5 60.65" stroke="#fff" stroke-width="1.2" fill="none" />
<rect x="237.5" y="66" width="595.5" height="382.6" fill="#ffffff" stroke="none" stroke-width="1" />
<rect x="237.1" y="66" width="1.8" height="382.6" fill="#80504c" stroke="none" stroke-width="1" />
<rect x="736.0" y="66" width="1.3" height="382.6" fill="#a26a7c" stroke="none" stroke-width="1" />
<rect x="430.2" y="83.4" width="19.2" height="2.8" fill="#5a5a5a" stroke="none" stroke-width="1" />
<rect x="430.2" y="85" width="1.2" height="2.5" fill="#5a5a5a" stroke="none" stroke-width="1" />
<rect x="448.2" y="85" width="1.2" height="2.5" fill="#5a5a5a" stroke="none" stroke-width="1" />
<rect x="424.4" y="87.1" width="12.2" height="9.4" fill="#fff" stroke="#1e1e1e" stroke-width="0.9" />
<rect x="443.0" y="87.1" width="12.5" height="9.4" fill="#fff" stroke="#1e1e1e" stroke-width="0.9" />
<text x="430.5" y="94.3" font-size="7.4" fill="#2a2a2a" font-weight="normal" text-anchor="middle" stroke="#2a2a2a" stroke-width="0.12">A0</text>
<text x="449.3" y="94.3" font-size="7.4" fill="#2a2a2a" font-weight="normal" text-anchor="middle" stroke="#2a2a2a" stroke-width="0.12">A1</text>
<line x1="430.5" y1="96.5" x2="430.5" y2="98.8" stroke="#1e1e1e" stroke-width="0.9" />
<line x1="449.4" y1="96.5" x2="449.4" y2="98.8" stroke="#1e1e1e" stroke-width="0.9" />
<rect x="381.4" y="96.1" width="35.7" height="15.0" fill="#fff" stroke="#1e1e1e" stroke-width="0.95" />
<line x1="385.2" y1="96.1" x2="385.2" y2="111.1" stroke="#444" stroke-width="0.6" />
<rect x="383.6" y="100" width="1.6" height="6.6" fill="#9a9a9a" stroke="none" stroke-width="1" />
<path d="M391.3 99.0 L386.6 99.0 L386.6 107.9 L391.3 107.9 L391.3 105.6 L389.2 105.6 L389.2 101.3 L391.3 101.3 Z" stroke="none" stroke-width="1" fill="#0a0a0a" />
<line x1="392.7" y1="96.1" x2="392.7" y2="111.1" stroke="#1e1e1e" stroke-width="0.8" />
<path d="M392.7 98.8 Q397.6 103.4 392.7 108.0 Z" stroke="none" stroke-width="1" fill="#8e8e8e" />
<path d="M396.4 101.3 L429.2 101.3 Q431.0 101.5 431.0 103.4 Q431.0 105.3 429.2 105.5 L396.4 105.5" stroke="#1e1e1e" stroke-width="0.9" fill="#fff" />
<line x1="385.8" y1="112.5" x2="392.6" y2="92.5" stroke="#1e1e1e" stroke-width="0.7" />
<path d="M391.2 93.8 L392.9 90.6 L393.8 94.4 Z" stroke="none" stroke-width="1" fill="#1e1e1e" />
<line x1="384.0" y1="111.1" x2="384.0" y2="186.6" stroke="#1e1e1e" stroke-width="0.95" />
<line x1="414.2" y1="111.1" x2="414.2" y2="186.6" stroke="#1e1e1e" stroke-width="0.95" />
<path d="M384.0 114.1 L385.5 115.6 L384.0 117.1 L382.5 115.6 Z" stroke="#333" stroke-width="0.8" fill="#c8c8c8" />
<path d="M414.2 114.1 L415.7 115.6 L414.2 117.1 L412.7 115.6 Z" stroke="#333" stroke-width="0.8" fill="#c8c8c8" />
<path d="M384.0 133.5 L385.5 135.0 L384.0 136.5 L382.5 135.0 Z" stroke="#333" stroke-width="0.8" fill="#c8c8c8" />
<path d="M414.2 133.5 L415.7 135.0 L414.2 136.5 L412.7 135.0 Z" stroke="#333" stroke-width="0.8" fill="#c8c8c8" />
<path d="M384.0 171.1 L385.5 172.6 L384.0 174.1 L382.5 172.6 Z" stroke="#333" stroke-width="0.8" fill="#c8c8c8" />
<path d="M414.2 171.1 L415.7 172.6 L414.2 174.1 L412.7 172.6 Z" stroke="#333" stroke-width="0.8" fill="#c8c8c8" />
<path d="M380.4 148.6 L380.4 142.4 L385.2 142.4 M390.6 142.4 L393.2 142.4 M395.9 143 L395.9 149.4 M395.9 155.8 L395.9 163.4 M380.4 156.2 L380.4 163.6 M380.6 165 L385.6 165 M390.2 165 L391.6 165" stroke="#333" stroke-width="0.9" fill="none" />
<circle cx="384.0" cy="145.8" r="1.35" fill="#1e1e1e" stroke="none" stroke-width="0"/>
<circle cx="384.0" cy="160.9" r="1.35" fill="#1e1e1e" stroke="none" stroke-width="0"/>
<path d="M384.0 145.8 L391.6 145.8 L391.6 160.9 L384.0 160.9" stroke="#1e1e1e" stroke-width="0.9" fill="none" />
<circle cx="391.6" cy="153.4" r="2.1" fill="#fff" stroke="#1e1e1e" stroke-width="0.9"/>
<path d="M382.2 149.6 Q384.8 152.6 382.2 155.8 M385.8 149.6 Q383.2 152.6 385.8 155.8" stroke="#1e1e1e" stroke-width="0.8" fill="none" />
<path d="M380.4 152.4 L385.2 152.4 M381.5 155 L386.2 150" stroke="#1e1e1e" stroke-width="1.2" fill="none" />
<path d="M410.59999999999997 148.6 L410.59999999999997 142.4 L415.4 142.4 M420.8 142.4 L423.4 142.4 M426.09999999999997 143 L426.09999999999997 149.4 M426.09999999999997 155.8 L426.09999999999997 163.4 M410.59999999999997 156.2 L410.59999999999997 163.6 M410.8 165 L415.8 165 M420.4 165 L421.8 165" stroke="#333" stroke-width="0.9" fill="none" />
<circle cx="414.2" cy="145.8" r="1.35" fill="#1e1e1e" stroke="none" stroke-width="0"/>
<circle cx="414.2" cy="160.9" r="1.35" fill="#1e1e1e" stroke="none" stroke-width="0"/>
<path d="M414.2 145.8 L421.8 145.8 L421.8 160.9 L414.2 160.9" stroke="#1e1e1e" stroke-width="0.9" fill="none" />
<circle cx="421.8" cy="153.4" r="2.1" fill="#fff" stroke="#1e1e1e" stroke-width="0.9"/>
<path d="M412.4 149.6 Q415.0 152.6 412.4 155.8 M416.0 149.6 Q413.4 152.6 416.0 155.8" stroke="#1e1e1e" stroke-width="0.8" fill="none" />
<path d="M410.59999999999997 152.4 L415.4 152.4 M411.7 155 L416.4 150" stroke="#1e1e1e" stroke-width="1.2" fill="none" />
<rect x="610.6" y="83.4" width="19.2" height="2.8" fill="#5a5a5a" stroke="none" stroke-width="1" />
<rect x="610.6" y="85" width="1.2" height="2.5" fill="#5a5a5a" stroke="none" stroke-width="1" />
<rect x="628.6" y="85" width="1.2" height="2.5" fill="#5a5a5a" stroke="none" stroke-width="1" />
<rect x="604.8" y="87.1" width="12.2" height="9.4" fill="#fff" stroke="#1e1e1e" stroke-width="0.9" />
<rect x="623.4" y="87.1" width="12.5" height="9.4" fill="#fff" stroke="#1e1e1e" stroke-width="0.9" />
<text x="610.9" y="94.3" font-size="7.4" fill="#2a2a2a" font-weight="normal" text-anchor="middle" stroke="#2a2a2a" stroke-width="0.12">B0</text>
<text x="629.7" y="94.3" font-size="7.4" fill="#2a2a2a" font-weight="normal" text-anchor="middle" stroke="#2a2a2a" stroke-width="0.12">B1</text>
<line x1="610.9" y1="96.5" x2="610.9" y2="98.8" stroke="#1e1e1e" stroke-width="0.9" />
<line x1="629.8" y1="96.5" x2="629.8" y2="98.8" stroke="#1e1e1e" stroke-width="0.9" />
<rect x="561.8" y="96.1" width="35.7" height="15.0" fill="#fff" stroke="#1e1e1e" stroke-width="0.95" />
<line x1="565.6" y1="96.1" x2="565.6" y2="111.1" stroke="#444" stroke-width="0.6" />
<rect x="564.0" y="100" width="1.6" height="6.6" fill="#9a9a9a" stroke="none" stroke-width="1" />
<path d="M571.7 99.0 L567.0 99.0 L567.0 107.9 L571.7 107.9 L571.7 105.6 L569.6 105.6 L569.6 101.3 L571.7 101.3 Z" stroke="none" stroke-width="1" fill="#0a0a0a" />
<line x1="573.1" y1="96.1" x2="573.1" y2="111.1" stroke="#1e1e1e" stroke-width="0.8" />
<path d="M573.1 98.8 Q578.0 103.4 573.1 108.0 Z" stroke="none" stroke-width="1" fill="#8e8e8e" />
<path d="M576.8 101.3 L609.6 101.3 Q611.4 101.5 611.4 103.4 Q611.4 105.3 609.6 105.5 L576.8 105.5" stroke="#1e1e1e" stroke-width="0.9" fill="#fff" />
<line x1="566.2" y1="112.5" x2="573.0" y2="92.5" stroke="#1e1e1e" stroke-width="0.7" />
<path d="M571.6 93.8 L573.3 90.6 L574.2 94.4 Z" stroke="none" stroke-width="1" fill="#1e1e1e" />
<line x1="564.4" y1="111.1" x2="564.4" y2="186.6" stroke="#1e1e1e" stroke-width="0.95" />
<line x1="594.6" y1="111.1" x2="594.6" y2="186.6" stroke="#1e1e1e" stroke-width="0.95" />
<path d="M564.4 114.1 L565.9 115.6 L564.4 117.1 L562.9 115.6 Z" stroke="#333" stroke-width="0.8" fill="#c8c8c8" />
<path d="M594.6 114.1 L596.1 115.6 L594.6 117.1 L593.1 115.6 Z" stroke="#333" stroke-width="0.8" fill="#c8c8c8" />
<path d="M564.4 133.5 L565.9 135.0 L564.4 136.5 L562.9 135.0 Z" stroke="#333" stroke-width="0.8" fill="#c8c8c8" />
<path d="M594.6 133.5 L596.1 135.0 L594.6 136.5 L593.1 135.0 Z" stroke="#333" stroke-width="0.8" fill="#c8c8c8" />
<path d="M564.4 171.1 L565.9 172.6 L564.4 174.1 L562.9 172.6 Z" stroke="#333" stroke-width="0.8" fill="#c8c8c8" />
<path d="M594.6 171.1 L596.1 172.6 L594.6 174.1 L593.1 172.6 Z" stroke="#333" stroke-width="0.8" fill="#c8c8c8" />
<path d="M560.8 148.6 L560.8 142.4 L565.6 142.4 M571.0 142.4 L573.6 142.4 M576.3 143 L576.3 149.4 M576.3 155.8 L576.3 163.4 M560.8 156.2 L560.8 163.6 M561.0 165 L566.0 165 M570.6 165 L572.0 165" stroke="#333" stroke-width="0.9" fill="none" />
<circle cx="564.4" cy="145.8" r="1.35" fill="#1e1e1e" stroke="none" stroke-width="0"/>
<circle cx="564.4" cy="160.9" r="1.35" fill="#1e1e1e" stroke="none" stroke-width="0"/>
<path d="M564.4 145.8 L572.0 145.8 L572.0 160.9 L564.4 160.9" stroke="#1e1e1e" stroke-width="0.9" fill="none" />
<circle cx="572.0" cy="153.4" r="2.1" fill="#fff" stroke="#1e1e1e" stroke-width="0.9"/>
<path d="M562.6 149.6 Q565.1999999999999 152.6 562.6 155.8 M566.1999999999999 149.6 Q563.6 152.6 566.1999999999999 155.8" stroke="#1e1e1e" stroke-width="0.8" fill="none" />
<path d="M560.8 152.4 L565.6 152.4 M561.9 155 L566.6 150" stroke="#1e1e1e" stroke-width="1.2" fill="none" />
<path d="M591.0 148.6 L591.0 142.4 L595.8000000000001 142.4 M601.2 142.4 L603.8000000000001 142.4 M606.5 143 L606.5 149.4 M606.5 155.8 L606.5 163.4 M591.0 156.2 L591.0 163.6 M591.2 165 L596.2 165 M600.8000000000001 165 L602.2 165" stroke="#333" stroke-width="0.9" fill="none" />
<circle cx="594.6" cy="145.8" r="1.35" fill="#1e1e1e" stroke="none" stroke-width="0"/>
<circle cx="594.6" cy="160.9" r="1.35" fill="#1e1e1e" stroke="none" stroke-width="0"/>
<path d="M594.6 145.8 L602.2 145.8 L602.2 160.9 L594.6 160.9" stroke="#1e1e1e" stroke-width="0.9" fill="none" />
<circle cx="602.2" cy="153.4" r="2.1" fill="#fff" stroke="#1e1e1e" stroke-width="0.9"/>
<path d="M592.8000000000001 149.6 Q595.4 152.6 592.8000000000001 155.8 M596.4 149.6 Q593.8000000000001 152.6 596.4 155.8" stroke="#1e1e1e" stroke-width="0.8" fill="none" />
<path d="M591.0 152.4 L595.8000000000001 152.4 M592.1 155 L596.8000000000001 150" stroke="#1e1e1e" stroke-width="1.2" fill="none" />
<path d="M384.0 186.6 L399.4 186.6 L399.4 202.3" stroke="#1e1e1e" stroke-width="0.95" fill="none" />
<path d="M414.2 186.6 L406.6 186.6 L406.6 202.3" stroke="#1e1e1e" stroke-width="0.95" fill="none" />
<path d="M399.4 197.7 L400.9 199.2 L399.4 200.7 L397.9 199.2 Z" stroke="#333" stroke-width="0.8" fill="#c8c8c8" />
<path d="M406.6 197.7 L408.1 199.2 L406.6 200.7 L405.1 199.2 Z" stroke="#333" stroke-width="0.8" fill="#c8c8c8" />
<rect x="380.3" y="202.4" width="30.1" height="15.5" fill="#fff" stroke="#1e1e1e" stroke-width="0.95" />
<line x1="395.2" y1="202.4" x2="395.2" y2="217.9" stroke="#1e1e1e" stroke-width="1.1" />
<line x1="384.3" y1="216.8" x2="384.3" y2="206.5" stroke="#1e1e1e" stroke-width="0.95" />
<path d="M382.8 207.4 L384.3 203.2 L385.8 207.4 Z" stroke="none" stroke-width="1" fill="#1e1e1e" />
<line x1="391.3" y1="203.4" x2="391.3" y2="213.5" stroke="#1e1e1e" stroke-width="0.95" />
<path d="M389.8 212.8 L391.3 217.0 L392.8 212.8 Z" stroke="none" stroke-width="1" fill="#1e1e1e" />
<line x1="399.4" y1="202.4" x2="406.0" y2="215.8" stroke="#1e1e1e" stroke-width="1.1" />
<line x1="399.4" y1="217.9" x2="406.0" y2="204.5" stroke="#1e1e1e" stroke-width="1.1" />
<path d="M403.6 207.0 L406.8 202.9 L407.2 208.6 Z" stroke="none" stroke-width="1" fill="#1e1e1e" />
<path d="M403.6 213.3 L406.8 217.4 L407.2 211.7 Z" stroke="none" stroke-width="1" fill="#1e1e1e" />
<line x1="399.4" y1="217.9" x2="399.4" y2="234" stroke="#1e1e1e" stroke-width="0.95" />
<path d="M399.4 219.6 L400.9 221.1 L399.4 222.6 L397.9 221.1 Z" stroke="#333" stroke-width="0.8" fill="#c8c8c8" />
<line x1="406.6" y1="217.9" x2="406.6" y2="219.5" stroke="#1e1e1e" stroke-width="0.9" />
<circle cx="406.6" cy="221.3" r="1.4" fill="#fff" stroke="#1e1e1e" stroke-width="1.0"/>
<path d="M399.4 231.3 L400.9 232.8 L399.4 234.3 L397.9 232.8 Z" stroke="#333" stroke-width="0.8" fill="#c8c8c8" />
<path d="M399.4 233.8 L403.3 240.4 L395.5 240.4 Z" stroke="#1e1e1e" stroke-width="0.9" fill="#fff" />
<text x="392.6" y="198.6" font-size="7.0" fill="#2a2a2a" font-weight="normal" text-anchor="middle" stroke="#2a2a2a" stroke-width="0.12">4</text>
<text x="414.0" y="198.6" font-size="7.0" fill="#2a2a2a" font-weight="normal" text-anchor="middle" stroke="#2a2a2a" stroke-width="0.12">2</text>
<text x="393.0" y="225.9" font-size="7.0" fill="#2a2a2a" font-weight="normal" text-anchor="middle" stroke="#2a2a2a" stroke-width="0.12">1</text>
<text x="414.0" y="225.9" font-size="7.0" fill="#2a2a2a" font-weight="normal" text-anchor="middle" stroke="#2a2a2a" stroke-width="0.12">3</text>
<path d="M335.6 273 L335.6 213.8 L380.3 213.8" stroke="#1e1e1e" stroke-width="0.95" fill="none" />
<path d="M447.8 273 L447.8 213.8 L410.4 213.8" stroke="#1e1e1e" stroke-width="0.95" fill="none" />
<path d="M369.1 212.60000000000002 L370.3 213.8 L369.1 215.0 L367.90000000000003 213.8 Z" stroke="#333" stroke-width="0.8" fill="#c8c8c8" />
<path d="M372.3 211.6 L375.0 213.8 L372.3 216.0 Z" stroke="#1e1e1e" stroke-width="0.8" fill="#fff" />
<path d="M421.2 212.60000000000002 L422.4 213.8 L421.2 215.0 L420.0 213.8 Z" stroke="#333" stroke-width="0.8" fill="#c8c8c8" />
<path d="M418.6 211.6 L415.9 213.8 L418.6 216.0 Z" stroke="#1e1e1e" stroke-width="0.8" fill="#fff" />
<path d="M564.4 186.6 L579.8 186.6 L579.8 202.3" stroke="#1e1e1e" stroke-width="0.95" fill="none" />
<path d="M594.6 186.6 L587.0 186.6 L587.0 202.3" stroke="#1e1e1e" stroke-width="0.95" fill="none" />
<path d="M579.8 197.7 L581.3 199.2 L579.8 200.7 L578.3 199.2 Z" stroke="#333" stroke-width="0.8" fill="#c8c8c8" />
<path d="M587.0 197.7 L588.5 199.2 L587.0 200.7 L585.5 199.2 Z" stroke="#333" stroke-width="0.8" fill="#c8c8c8" />
<rect x="560.7" y="202.4" width="30.1" height="15.5" fill="#fff" stroke="#1e1e1e" stroke-width="0.95" />
<line x1="575.6" y1="202.4" x2="575.6" y2="217.9" stroke="#1e1e1e" stroke-width="1.1" />
<line x1="564.7" y1="216.8" x2="564.7" y2="206.5" stroke="#1e1e1e" stroke-width="0.95" />
<path d="M563.2 207.4 L564.7 203.2 L566.2 207.4 Z" stroke="none" stroke-width="1" fill="#1e1e1e" />
<line x1="571.7" y1="203.4" x2="571.7" y2="213.5" stroke="#1e1e1e" stroke-width="0.95" />
<path d="M570.2 212.8 L571.7 217.0 L573.2 212.8 Z" stroke="none" stroke-width="1" fill="#1e1e1e" />
<line x1="579.8" y1="202.4" x2="586.4" y2="215.8" stroke="#1e1e1e" stroke-width="1.1" />
<line x1="579.8" y1="217.9" x2="586.4" y2="204.5" stroke="#1e1e1e" stroke-width="1.1" />
<path d="M584.0 207.0 L587.2 202.9 L587.6 208.6 Z" stroke="none" stroke-width="1" fill="#1e1e1e" />
<path d="M584.0 213.3 L587.2 217.4 L587.6 211.7 Z" stroke="none" stroke-width="1" fill="#1e1e1e" />
<line x1="579.8" y1="217.9" x2="579.8" y2="234" stroke="#1e1e1e" stroke-width="0.95" />
<path d="M579.8 219.6 L581.3 221.1 L579.8 222.6 L578.3 221.1 Z" stroke="#333" stroke-width="0.8" fill="#c8c8c8" />
<line x1="587.0" y1="217.9" x2="587.0" y2="219.5" stroke="#1e1e1e" stroke-width="0.9" />
<circle cx="587.0" cy="221.3" r="1.4" fill="#fff" stroke="#1e1e1e" stroke-width="1.0"/>
<path d="M579.8 231.3 L581.3 232.8 L579.8 234.3 L578.3 232.8 Z" stroke="#333" stroke-width="0.8" fill="#c8c8c8" />
<path d="M579.8 233.8 L583.7 240.4 L575.9 240.4 Z" stroke="#1e1e1e" stroke-width="0.9" fill="#fff" />
<text x="573.0" y="198.6" font-size="7.0" fill="#2a2a2a" font-weight="normal" text-anchor="middle" stroke="#2a2a2a" stroke-width="0.12">4</text>
<text x="594.4" y="198.6" font-size="7.0" fill="#2a2a2a" font-weight="normal" text-anchor="middle" stroke="#2a2a2a" stroke-width="0.12">2</text>
<text x="573.4" y="225.9" font-size="7.0" fill="#2a2a2a" font-weight="normal" text-anchor="middle" stroke="#2a2a2a" stroke-width="0.12">1</text>
<text x="594.4" y="225.9" font-size="7.0" fill="#2a2a2a" font-weight="normal" text-anchor="middle" stroke="#2a2a2a" stroke-width="0.12">3</text>
<path d="M523.3 273 L523.3 213.8 L560.7 213.8" stroke="#1e1e1e" stroke-width="0.95" fill="none" />
<path d="M643.6 273 L643.6 213.8 L590.8 213.8" stroke="#1e1e1e" stroke-width="0.95" fill="none" />
<path d="M549.5 212.60000000000002 L550.7 213.8 L549.5 215.0 L548.3 213.8 Z" stroke="#333" stroke-width="0.8" fill="#c8c8c8" />
<path d="M552.7 211.6 L555.4 213.8 L552.7 216.0 Z" stroke="#1e1e1e" stroke-width="0.8" fill="#fff" />
<path d="M601.6 212.60000000000002 L602.8000000000001 213.8 L601.6 215.0 L600.4 213.8 Z" stroke="#333" stroke-width="0.8" fill="#c8c8c8" />
<path d="M599.0 211.6 L596.3 213.8 L599.0 216.0 Z" stroke="#1e1e1e" stroke-width="0.8" fill="#fff" />
<line x1="335.4" y1="273" x2="335.4" y2="404" stroke="#1e1e1e" stroke-width="0.95" />
<rect x="331.4" y="277.5" width="30.3" height="15.699999999999989" fill="#fff" stroke="#1e1e1e" stroke-width="0.95" />
<line x1="346.5" y1="277.5" x2="346.5" y2="293.2" stroke="#1e1e1e" stroke-width="1.0" />
<line x1="335.4" y1="293.2" x2="335.4" y2="280.0" stroke="#1e1e1e" stroke-width="0.9" />
<path d="M333.9 281.9 L335.4 277.9 L336.9 281.9 Z" stroke="none" stroke-width="1" fill="#1e1e1e" />
<line x1="341.0" y1="289.2" x2="343.79999999999995" y2="289.2" stroke="#1e1e1e" stroke-width="0.8" />
<line x1="342.4" y1="289.2" x2="342.4" y2="293.2" stroke="#1e1e1e" stroke-width="0.8" />
<line x1="349.40000000000003" y1="289.2" x2="352.2" y2="289.2" stroke="#1e1e1e" stroke-width="0.8" />
<line x1="350.8" y1="289.2" x2="350.8" y2="293.2" stroke="#1e1e1e" stroke-width="0.8" />
<line x1="350.0" y1="277.5" x2="357.3" y2="291.7" stroke="#1e1e1e" stroke-width="0.9" />
<path d="M355.1 290.0 L357.8 293.0 L357.9 288.2 Z" stroke="none" stroke-width="1" fill="#1e1e1e" />
<path d="M340.4 295.5 L346.0 295.5 L343.2 301.5 Z" stroke="#1e1e1e" stroke-width="0.8" fill="#fff" />
<line x1="343.2" y1="293.2" x2="343.2" y2="295.5" stroke="#1e1e1e" stroke-width="0.8" />
<path d="M362.3 288.8 L363.3 285.6 L364.3 292.0 L365.3 285.6 L366.3 292.0 L367.3 285.6 L368.3 292.0 L369.3 285.6" stroke="#333" stroke-width="0.8" fill="none" />
<path d="M335.4 272.8 L336.9 274.3 L335.4 275.8 L333.9 274.3 Z" stroke="#333" stroke-width="0.8" fill="#c8c8c8" />
<path d="M335.4 294.6 L336.9 296.1 L335.4 297.6 L333.9 296.1 Z" stroke="#333" stroke-width="0.8" fill="#c8c8c8" />
<text x="328.59999999999997" y="274.4" font-size="7.0" fill="#2a2a2a" font-weight="normal" text-anchor="middle" stroke="#2a2a2a" stroke-width="0.12">2</text>
<text x="328.59999999999997" y="301.3" font-size="7.0" fill="#2a2a2a" font-weight="normal" text-anchor="middle" stroke="#2a2a2a" stroke-width="0.12">1</text>
<text x="349.59999999999997" y="301.3" font-size="7.0" fill="#2a2a2a" font-weight="normal" text-anchor="middle" stroke="#2a2a2a" stroke-width="0.12">3</text>
<path d="M331.4 287.2 L321.09999999999997 287.2 L321.09999999999997 291.4 L331.4 291.4" stroke="#1e1e1e" stroke-width="0.8" fill="#fff" />
<circle cx="320.79999999999995" cy="289.3" r="1.6" fill="#fff" stroke="#1e1e1e" stroke-width="0.8"/>
<rect x="308.79999999999995" y="285.0" width="11.4" height="7.9" fill="#d8d8dc" stroke="#111" stroke-width="1.3" />
<text x="314.5" y="291.4" font-size="6.6" fill="#3a4a7a" font-weight="normal" text-anchor="middle" >B0</text>
<line x1="308.9" y1="278.4" x2="319.9" y2="273.8" stroke="#333" stroke-width="0.8" />
<line x1="308.9" y1="281.09999999999997" x2="319.9" y2="276.5" stroke="#333" stroke-width="0.8" />
<line x1="308.9" y1="283.79999999999995" x2="319.9" y2="279.2" stroke="#333" stroke-width="0.8" />
<line x1="308.9" y1="286.5" x2="319.9" y2="281.90000000000003" stroke="#333" stroke-width="0.8" />
<line x1="319.9" y1="273.5" x2="319.9" y2="285" stroke="#333" stroke-width="0.8" />
<line x1="310.4" y1="303.8" x2="314.4" y2="297.5" stroke="#333" stroke-width="0.8" />
<line x1="312.9" y1="293" x2="312.9" y2="303" stroke="#333" stroke-width="0.8" />
<line x1="308.4" y1="298" x2="319.9" y2="293.2" stroke="#333" stroke-width="0.8" />
<rect x="316.1" y="318.8" width="30.6" height="15.699999999999989" fill="#fff" stroke="#1e1e1e" stroke-width="0.95" />
<line x1="331.0" y1="318.8" x2="331.0" y2="334.5" stroke="#1e1e1e" stroke-width="1.0" />
<line x1="320.3" y1="333.5" x2="320.3" y2="321.3" stroke="#1e1e1e" stroke-width="0.9" />
<path d="M318.8 323.2 L320.3 319.2 L321.8 323.2 Z" stroke="none" stroke-width="1" fill="#1e1e1e" />
<line x1="325.70000000000005" y1="330.5" x2="328.5" y2="330.5" stroke="#1e1e1e" stroke-width="0.8" />
<line x1="327.1" y1="330.5" x2="327.1" y2="334.5" stroke="#1e1e1e" stroke-width="0.8" />
<line x1="333.90000000000003" y1="330.5" x2="336.7" y2="330.5" stroke="#1e1e1e" stroke-width="0.8" />
<line x1="335.3" y1="330.5" x2="335.3" y2="334.5" stroke="#1e1e1e" stroke-width="0.8" />
<line x1="335.3" y1="318.8" x2="342.5" y2="333.0" stroke="#1e1e1e" stroke-width="0.9" />
<path d="M340.2 331.3 L342.9 334.3 L343.0 329.5 Z" stroke="none" stroke-width="1" fill="#1e1e1e" />
<path d="M339.8 336.8 L345.40000000000003 336.8 L342.6 342.8 Z" stroke="#1e1e1e" stroke-width="0.8" fill="#fff" />
<path d="M347.30000000000007 330.0 L348.30000000000007 326.8 L349.30000000000007 333.2 L350.30000000000007 326.8 L351.30000000000007 333.2 L352.30000000000007 326.8 L353.30000000000007 333.2 L354.30000000000007 326.8" stroke="#333" stroke-width="0.8" fill="none" />
<path d="M335.3 313.9 L336.8 315.4 L335.3 316.9 L333.8 315.4 Z" stroke="#333" stroke-width="0.8" fill="#c8c8c8" />
<path d="M335.3 336.2 L336.8 337.7 L335.3 339.2 L333.8 337.7 Z" stroke="#333" stroke-width="0.8" fill="#c8c8c8" />
<text x="328.1" y="315.6" font-size="7.0" fill="#2a2a2a" font-weight="normal" text-anchor="middle" stroke="#2a2a2a" stroke-width="0.12">2</text>
<text x="328.8" y="342.7" font-size="7.0" fill="#2a2a2a" font-weight="normal" text-anchor="middle" stroke="#2a2a2a" stroke-width="0.12">1</text>
<text x="348.8" y="342.7" font-size="7.0" fill="#2a2a2a" font-weight="normal" text-anchor="middle" stroke="#2a2a2a" stroke-width="0.12">3</text>
<path d="M316.1 327.2 L307.5 327.2 L307.5 333.8 L316.1 333.8" stroke="#1e1e1e" stroke-width="0.9" fill="#fff" />
<line x1="307.0" y1="325.5" x2="307.0" y2="335.5" stroke="#1e1e1e" stroke-width="1.2" />
<circle cx="335.4" cy="383.2" r="1.9" fill="#1e1e1e" stroke="none" stroke-width="0"/>
<path d="M335.4 399.7 L336.9 401.2 L335.4 402.7 L333.9 401.2 Z" stroke="#333" stroke-width="0.8" fill="#c8c8c8" />
<path d="M335.4 404.0 L339.2 409.8 L331.6 409.8 Z" stroke="#1e1e1e" stroke-width="0.9" fill="#fff" />
<line x1="447.8" y1="273" x2="447.8" y2="383.2" stroke="#1e1e1e" stroke-width="0.95" />
<rect x="428.7" y="277.5" width="30.3" height="15.699999999999989" fill="#fff" stroke="#1e1e1e" stroke-width="0.95" />
<line x1="443.8" y1="277.5" x2="443.8" y2="293.2" stroke="#1e1e1e" stroke-width="1.0" />
<line x1="433.0" y1="292.2" x2="433.0" y2="280.0" stroke="#1e1e1e" stroke-width="0.9" />
<path d="M431.5 281.9 L433.0 277.9 L434.5 281.9 Z" stroke="none" stroke-width="1" fill="#1e1e1e" />
<line x1="438.3" y1="289.2" x2="441.09999999999997" y2="289.2" stroke="#1e1e1e" stroke-width="0.8" />
<line x1="439.7" y1="289.2" x2="439.7" y2="293.2" stroke="#1e1e1e" stroke-width="0.8" />
<line x1="446.40000000000003" y1="289.2" x2="449.2" y2="289.2" stroke="#1e1e1e" stroke-width="0.8" />
<line x1="447.8" y1="289.2" x2="447.8" y2="293.2" stroke="#1e1e1e" stroke-width="0.8" />
<line x1="447.8" y1="277.5" x2="455.8" y2="291.7" stroke="#1e1e1e" stroke-width="0.9" />
<path d="M453.5 290.0 L456.2 293.0 L456.3 288.2 Z" stroke="none" stroke-width="1" fill="#1e1e1e" />
<path d="M451.4 295.5 L457.0 295.5 L454.2 301.5 Z" stroke="#1e1e1e" stroke-width="0.8" fill="#fff" />
<line x1="454.2" y1="293.2" x2="454.2" y2="295.5" stroke="#1e1e1e" stroke-width="0.8" />
<path d="M459.6 288.8 L460.6 285.6 L461.6 292.0 L462.6 285.6 L463.6 292.0 L464.6 285.6 L465.6 292.0 L466.6 285.6" stroke="#333" stroke-width="0.8" fill="none" />
<path d="M447.8 272.8 L449.3 274.3 L447.8 275.8 L446.3 274.3 Z" stroke="#333" stroke-width="0.8" fill="#c8c8c8" />
<path d="M447.8 294.6 L449.3 296.1 L447.8 297.6 L446.3 296.1 Z" stroke="#333" stroke-width="0.8" fill="#c8c8c8" />
<text x="441.0" y="274.4" font-size="7.0" fill="#2a2a2a" font-weight="normal" text-anchor="middle" stroke="#2a2a2a" stroke-width="0.12">2</text>
<text x="441.0" y="301.3" font-size="7.0" fill="#2a2a2a" font-weight="normal" text-anchor="middle" stroke="#2a2a2a" stroke-width="0.12">1</text>
<text x="460.59999999999997" y="301.3" font-size="7.0" fill="#2a2a2a" font-weight="normal" text-anchor="middle" stroke="#2a2a2a" stroke-width="0.12">3</text>
<path d="M428.7 287.0 L420.2 287.0 L420.2 291.2 L428.7 291.2" stroke="#1e1e1e" stroke-width="0.8" fill="#fff" />
<circle cx="419.09999999999997" cy="289.1" r="1.4" fill="#fff" stroke="#1e1e1e" stroke-width="0.8"/>
<rect x="406.4" y="284.4" width="12.1" height="8.7" fill="#fff" stroke="#1e1e1e" stroke-width="0.9" />
<text x="412.4" y="291.5" font-size="7.2" fill="#222" font-weight="normal" text-anchor="middle" >A1</text>
<circle cx="447.8" cy="383.2" r="1.9" fill="#1e1e1e" stroke="none" stroke-width="0"/>
<line x1="523.3" y1="273" x2="523.3" y2="383.2" stroke="#1e1e1e" stroke-width="0.95" />
<rect x="519.3" y="277.5" width="30.3" height="15.699999999999989" fill="#fff" stroke="#1e1e1e" stroke-width="0.95" />
<line x1="534.4" y1="277.5" x2="534.4" y2="293.2" stroke="#1e1e1e" stroke-width="1.0" />
<line x1="523.3" y1="293.2" x2="523.3" y2="280.0" stroke="#1e1e1e" stroke-width="0.9" />
<path d="M521.8 281.9 L523.3 277.9 L524.8 281.9 Z" stroke="none" stroke-width="1" fill="#1e1e1e" />
<line x1="528.9" y1="289.2" x2="531.6999999999999" y2="289.2" stroke="#1e1e1e" stroke-width="0.8" />
<line x1="530.3" y1="289.2" x2="530.3" y2="293.2" stroke="#1e1e1e" stroke-width="0.8" />
<line x1="537.3" y1="289.2" x2="540.0999999999999" y2="289.2" stroke="#1e1e1e" stroke-width="0.8" />
<line x1="538.6999999999999" y1="289.2" x2="538.6999999999999" y2="293.2" stroke="#1e1e1e" stroke-width="0.8" />
<line x1="537.9" y1="277.5" x2="545.1999999999999" y2="291.7" stroke="#1e1e1e" stroke-width="0.9" />
<path d="M543.0 290.0 L545.6999999999999 293.0 L545.8 288.2 Z" stroke="none" stroke-width="1" fill="#1e1e1e" />
<path d="M528.3 295.5 L533.8999999999999 295.5 L531.0999999999999 301.5 Z" stroke="#1e1e1e" stroke-width="0.8" fill="#fff" />
<line x1="531.0999999999999" y1="293.2" x2="531.0999999999999" y2="295.5" stroke="#1e1e1e" stroke-width="0.8" />
<path d="M550.1999999999999 288.8 L551.1999999999999 285.6 L552.1999999999999 292.0 L553.1999999999999 285.6 L554.1999999999999 292.0 L555.1999999999999 285.6 L556.1999999999999 292.0 L557.1999999999999 285.6" stroke="#333" stroke-width="0.8" fill="none" />
<path d="M523.3 272.8 L524.8 274.3 L523.3 275.8 L521.8 274.3 Z" stroke="#333" stroke-width="0.8" fill="#c8c8c8" />
<path d="M523.3 294.6 L524.8 296.1 L523.3 297.6 L521.8 296.1 Z" stroke="#333" stroke-width="0.8" fill="#c8c8c8" />
<text x="516.5" y="274.4" font-size="7.0" fill="#2a2a2a" font-weight="normal" text-anchor="middle" stroke="#2a2a2a" stroke-width="0.12">2</text>
<text x="516.5" y="301.3" font-size="7.0" fill="#2a2a2a" font-weight="normal" text-anchor="middle" stroke="#2a2a2a" stroke-width="0.12">1</text>
<text x="537.4999999999999" y="301.3" font-size="7.0" fill="#2a2a2a" font-weight="normal" text-anchor="middle" stroke="#2a2a2a" stroke-width="0.12">3</text>
<path d="M519.3 287.2 L508.99999999999994 287.2 L508.99999999999994 291.4 L519.3 291.4" stroke="#1e1e1e" stroke-width="0.8" fill="#fff" />
<circle cx="508.69999999999993" cy="289.3" r="1.6" fill="#fff" stroke="#1e1e1e" stroke-width="0.8"/>
<rect x="496.69999999999993" y="285.0" width="11.4" height="7.9" fill="#d8d8dc" stroke="#111" stroke-width="1.3" />
<text x="502.4" y="291.4" font-size="6.6" fill="#3a4a7a" font-weight="normal" text-anchor="middle" >A0</text>
<line x1="496.79999999999995" y1="278.4" x2="507.79999999999995" y2="273.8" stroke="#333" stroke-width="0.8" />
<line x1="496.79999999999995" y1="281.09999999999997" x2="507.79999999999995" y2="276.5" stroke="#333" stroke-width="0.8" />
<line x1="496.79999999999995" y1="283.79999999999995" x2="507.79999999999995" y2="279.2" stroke="#333" stroke-width="0.8" />
<line x1="496.79999999999995" y1="286.5" x2="507.79999999999995" y2="281.90000000000003" stroke="#333" stroke-width="0.8" />
<line x1="507.79999999999995" y1="273.5" x2="507.79999999999995" y2="285" stroke="#333" stroke-width="0.8" />
<line x1="498.29999999999995" y1="303.8" x2="502.29999999999995" y2="297.5" stroke="#333" stroke-width="0.8" />
<line x1="500.79999999999995" y1="293" x2="500.79999999999995" y2="303" stroke="#333" stroke-width="0.8" />
<line x1="496.29999999999995" y1="298" x2="507.79999999999995" y2="293.2" stroke="#333" stroke-width="0.8" />
<circle cx="523.3" cy="383.2" r="1.9" fill="#1e1e1e" stroke="none" stroke-width="0"/>
<line x1="643.6" y1="273" x2="643.6" y2="383.2" stroke="#1e1e1e" stroke-width="0.95" />
<rect x="624.6" y="277.5" width="30.3" height="15.699999999999989" fill="#fff" stroke="#1e1e1e" stroke-width="0.95" />
<line x1="639.7" y1="277.5" x2="639.7" y2="293.2" stroke="#1e1e1e" stroke-width="1.0" />
<line x1="628.9" y1="292.2" x2="628.9" y2="280.0" stroke="#1e1e1e" stroke-width="0.9" />
<path d="M627.4 281.9 L628.9 277.9 L630.4 281.9 Z" stroke="none" stroke-width="1" fill="#1e1e1e" />
<line x1="634.2" y1="289.2" x2="637.0" y2="289.2" stroke="#1e1e1e" stroke-width="0.8" />
<line x1="635.6" y1="289.2" x2="635.6" y2="293.2" stroke="#1e1e1e" stroke-width="0.8" />
<line x1="642.2" y1="289.2" x2="645.0" y2="289.2" stroke="#1e1e1e" stroke-width="0.8" />
<line x1="643.6" y1="289.2" x2="643.6" y2="293.2" stroke="#1e1e1e" stroke-width="0.8" />
<line x1="643.6" y1="277.5" x2="651.7" y2="291.7" stroke="#1e1e1e" stroke-width="0.9" />
<path d="M649.4000000000001 290.0 L652.1 293.0 L652.2 288.2 Z" stroke="none" stroke-width="1" fill="#1e1e1e" />
<path d="M647.2 295.5 L652.8 295.5 L650.0 301.5 Z" stroke="#1e1e1e" stroke-width="0.8" fill="#fff" />
<line x1="650.0" y1="293.2" x2="650.0" y2="295.5" stroke="#1e1e1e" stroke-width="0.8" />
<path d="M655.5 288.8 L656.5 285.6 L657.5 292.0 L658.5 285.6 L659.5 292.0 L660.5 285.6 L661.5 292.0 L662.5 285.6" stroke="#333" stroke-width="0.8" fill="none" />
<path d="M643.6 272.8 L645.1 274.3 L643.6 275.8 L642.1 274.3 Z" stroke="#333" stroke-width="0.8" fill="#c8c8c8" />
<path d="M643.6 294.6 L645.1 296.1 L643.6 297.6 L642.1 296.1 Z" stroke="#333" stroke-width="0.8" fill="#c8c8c8" />
<text x="636.8000000000001" y="274.4" font-size="7.0" fill="#2a2a2a" font-weight="normal" text-anchor="middle" stroke="#2a2a2a" stroke-width="0.12">2</text>
<text x="636.8000000000001" y="301.3" font-size="7.0" fill="#2a2a2a" font-weight="normal" text-anchor="middle" stroke="#2a2a2a" stroke-width="0.12">1</text>
<text x="656.4" y="301.3" font-size="7.0" fill="#2a2a2a" font-weight="normal" text-anchor="middle" stroke="#2a2a2a" stroke-width="0.12">3</text>
<path d="M624.6 287.0 L616.1 287.0 L616.1 291.2 L624.6 291.2" stroke="#1e1e1e" stroke-width="0.8" fill="#fff" />
<circle cx="615.0" cy="289.1" r="1.4" fill="#fff" stroke="#1e1e1e" stroke-width="0.8"/>
<rect x="602.3000000000001" y="284.4" width="12.1" height="8.7" fill="#fff" stroke="#1e1e1e" stroke-width="0.9" />
<text x="608.3000000000001" y="291.5" font-size="7.2" fill="#222" font-weight="normal" text-anchor="middle" >B1</text>
<line x1="335.4" y1="383.2" x2="643.6" y2="383.2" stroke="#1e1e1e" stroke-width="0.95" />
<rect x="833" y="66" width="10.5" height="382.6" fill="#f0f0f0" stroke="none" stroke-width="1" />
<rect x="833.5" y="80" width="9.8" height="57" fill="#cdcdcd" stroke="none" stroke-width="1" />
<path d="M835.5 75 L838 72.5 L840.5 75" stroke="#555" stroke-width="1.1" fill="none" />
<path d="M835.5 441.5 L838 444 L840.5 441.5" stroke="#555" stroke-width="1.1" fill="none" />
<rect x="237.5" y="448.6" width="606" height="10.3" fill="#f0f0f0" stroke="none" stroke-width="1" />
<rect x="248.3" y="449" width="139.3" height="9.6" fill="#cdcdcd" stroke="none" stroke-width="1" />
<path d="M244 451 L241.6 453.6 L244 456.2" stroke="#555" stroke-width="1.1" fill="none" />
<path d="M825.5 451 L828 453.6 L825.5 456.2" stroke="#555" stroke-width="1.1" fill="none" />
<rect x="840" y="456" width="1" height="1" fill="#b5b5b5" stroke="none" stroke-width="1" />
<rect x="838" y="456" width="1" height="1" fill="#b5b5b5" stroke="none" stroke-width="1" />
<rect x="840" y="454" width="1" height="1" fill="#b5b5b5" stroke="none" stroke-width="1" />
<rect x="231.6" y="463.6" width="616.4" height="1.2" fill="#80878f" stroke="none" stroke-width="1" />
<rect x="0" y="464.6" width="848" height="13.4" fill="#efefef" stroke="none" stroke-width="1" />
<text x="0" y="474.8" font-size="7.6" fill="#111" font-weight="normal" text-anchor="start"  textLength="163.5" lengthAdjust="spacingAndGlyphs">C:\Program Files (x86)\Didactic\fl_sim_p4.en\sym</text>
<text x="801.6" y="474.8" font-size="7.6" fill="#111" font-weight="normal" text-anchor="start"  textLength="40.8" lengthAdjust="spacingAndGlyphs">238 archivos</text>
<rect x="0" y="477" width="848" height="1" fill="#9a9a9a" stroke="none" stroke-width="1" />
<rect x="265" y="476.6" width="35" height="1.4" fill="#58b46c" stroke="none" stroke-width="1" />
<path d="M224.8 197.8 L224.8 208.4 L227.1 206.3 L228.8 210.0 L230.6 209.2 L228.9 205.6 L232.0 205.4 Z" stroke="#111" stroke-width="0.9" fill="#fff" />
</svg></body></html>
